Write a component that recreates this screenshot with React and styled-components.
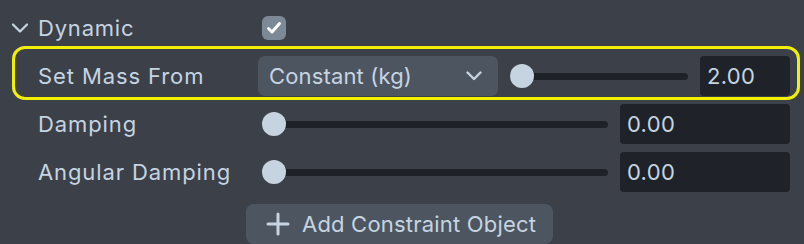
import { useState } from "react";
import styled, { createGlobalStyle } from "styled-components";

const GlobalStyle = createGlobalStyle`
  html, body {
    margin: 0;
    padding: 0;
    background: #3c4048;
  }
  body {
    font-family: Inter, "Noto Sans", sans-serif;
    color: #c6d4e1;
  }
`;

const Panel = styled.div`
  width: 804px;
  height: 244px;
  padding-top: 8px;
  box-sizing: border-box;
  overflow: hidden;
`;

const Header = styled.div`
  display: grid;
  grid-template-columns: 251px auto;
  align-items: center;
  height: 40px;
  padding-left: 11px;
`;

const Toggle = styled.div`
  display: flex;
  align-items: center;
  gap: 9px;
  font-size: 22px;
  letter-spacing: 0.8px;
`;

const Check = styled.div`
  width: 24px;
  height: 24px;
  border-radius: 6px;
  background: #7e8997;
  display: flex;
  align-items: center;
  justify-content: center;
`;

const Row = styled.div`
  display: grid;
  grid-template-columns: 224px 1fr;
  align-items: center;
  margin: ${(p) => (p.$highlight ? "-2px 4px 0 12px" : "0 4px 0 12px")};
  padding: ${(p) => (p.$highlight ? "7px 7px 1px 23px" : "2px 8px 2px 24px")};
  border: ${(p) => (p.$highlight ? "3px solid #f0f000" : "2px solid transparent")};
  border-radius: 13px;
`;

const Label = styled.div`
  font-size: 22px;
  letter-spacing: 0.9px;
  white-space: nowrap;
`;

const Controls = styled.div`
  display: flex;
  align-items: center;
  gap: 12px;
  height: 40px;
`;

const Select = styled.div`
  display: flex;
  align-items: center;
  justify-content: space-between;
  width: 240px;
  height: 40px;
  margin-left: -4px;
  padding: 0 16px 0 11px;
  box-sizing: border-box;
  border-radius: 7px;
  background: #4d5660;
  font-size: 22px;
  letter-spacing: 0.15px;
`;

const Slider = styled.div`
  position: relative;
  flex: 1;
  height: 24px;
  display: flex;
  align-items: center;
`;

const Track = styled.div`
  width: 100%;
  height: 7px;
  border-radius: 4px;
  background: #1e2228;
`;

const Thumb = styled.div`
  position: absolute;
  top: 0;
  width: 24px;
  height: 24px;
  border-radius: 50%;
  background: #c6d4e1;
`;

const NumberBox = styled.div`
  width: ${(p) => p.$width}px;
  height: 40px;
  box-sizing: border-box;
  padding-left: 7px;
  display: flex;
  align-items: center;
  border-radius: 4px;
  background: #1f2329;
  font-size: 22px;
  letter-spacing: 0.3px;
`;

const ButtonRow = styled.div`
  display: flex;
  padding: 8px 0 0 246px;
`;

const AddButton = styled.button`
  display: flex;
  align-items: center;
  gap: 12px;
  height: 40px;
  width: 307px;
  padding: 0 0 0 20px;
  box-sizing: border-box;
  border: none;
  border-radius: 8px;
  background: #4d5660;
  color: #c6d4e1;
  font-family: inherit;
  font-size: 22px;
  letter-spacing: 0.2px;
`;

function ValueSlider({ value }) {
  return (
    <Slider>
      <Track />
      <Thumb style={{ left: `calc(${value * 100}% - ${value * 24}px)` }} />
    </Slider>
  );
}

export default function App() {
  const [open] = useState(true);
  return (
    <>
      <GlobalStyle />
      <Panel>
        <Header>
          <Toggle>
            <svg width="18" height="12" viewBox="0 0 18 12">
              <path
                d="M2 2.5 L9 9.5 L16 2.5"
                fill="none"
                stroke="#c6d4e1"
                strokeWidth="2.2"
                strokeLinecap="round"
                strokeLinejoin="round"
              />
            </svg>
            Dynamic
          </Toggle>
          <Check>
            {open && (
              <svg width="16" height="14" viewBox="0 0 16 14">
                <path
                  d="M2.5 7.5 L6 11 L13.5 2.5"
                  fill="none"
                  stroke="#ffffff"
                  strokeWidth="3"
                  strokeLinecap="round"
                  strokeLinejoin="round"
                />
              </svg>
            )}
          </Check>
        </Header>

        <Row $highlight>
          <Label>Set Mass From</Label>
          <Controls>
            <Select>
              Constant (kg)
              <svg width="16" height="10" viewBox="0 0 16 10">
                <path
                  d="M1.5 1.5 L8 8 L14.5 1.5"
                  fill="none"
                  stroke="#c6d4e1"
                  strokeWidth="2.4"
                  strokeLinecap="round"
                  strokeLinejoin="round"
                />
              </svg>
            </Select>
            <ValueSlider value={0} />
            <NumberBox $width={90}>2.00</NumberBox>
          </Controls>
        </Row>

        <Row>
          <Label>Damping</Label>
          <Controls>
            <ValueSlider value={0} />
            <NumberBox $width={170}>0.00</NumberBox>
          </Controls>
        </Row>

        <Row>
          <Label>Angular Damping</Label>
          <Controls>
            <ValueSlider value={0} />
            <NumberBox $width={170}>0.00</NumberBox>
          </Controls>
        </Row>

        <ButtonRow>
          <AddButton>
            <svg width="24" height="24" viewBox="0 0 24 24">
              <path
                d="M12 2 V22 M2 12 H22"
                fill="none"
                stroke="#c6d4e1"
                strokeWidth="3"
                strokeLinecap="round"
              />
            </svg>
            Add Constraint Object
          </AddButton>
        </ButtonRow>
      </Panel>
    </>
  );
}
